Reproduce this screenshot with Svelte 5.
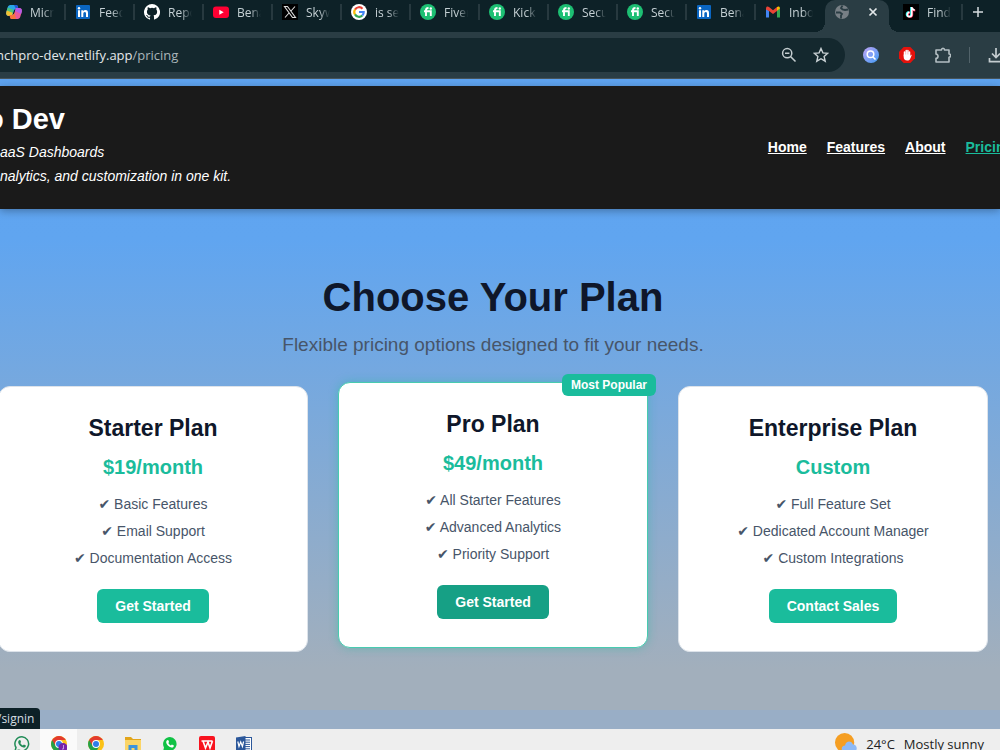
<script>
    const tabs = [
        { icon: 'copilot', title: 'Micro' },
        { icon: 'linkedin', title: 'Feed' },
        { icon: 'github', title: 'Repo' },
        { icon: 'youtube', title: 'Bena' },
        { icon: 'x', title: 'Skyw' },
        { icon: 'google', title: 'is sec' },
        { icon: 'fiverr', title: 'Fiver' },
        { icon: 'fiverr', title: 'Kick' },
        { icon: 'fiverr', title: 'Secu' },
        { icon: 'fiverr', title: 'Secu' },
        { icon: 'linkedin', title: 'Bena' },
        { icon: 'gmail', title: 'Inbo' },
        { icon: 'globe', title: '', active: true },
        { icon: 'tiktok', title: 'Find' }
    ]

    const plans = [
        {
            name: 'Starter Plan',
            price: '$19/month',
            features: ['Basic Features', 'Email Support', 'Documentation Access'],
            action: 'Get Started'
        },
        {
            name: 'Pro Plan',
            price: '$49/month',
            features: ['All Starter Features', 'Advanced Analytics', 'Priority Support'],
            action: 'Get Started',
            popular: true
        },
        {
            name: 'Enterprise Plan',
            price: 'Custom',
            features: ['Full Feature Set', 'Dedicated Account Manager', 'Custom Integrations'],
            action: 'Contact Sales'
        }
    ]

    const apps = ['whatsapp-outline', 'chrome-profile', 'chrome', 'folder', 'whatsapp', 'wps', 'word']
</script>

{#snippet icon(name)}
    <svg class="icon" viewBox="0 0 16 16" aria-hidden="true">
        {#if name === 'copilot'}
            <path d="M5 1h5c1 0 1.500.5 1.800 1.500L12.500 5H10C8.500 5 8 6 7.500 7.500L6 12H3C.5 12-.2 10.500.3 8l1.500-5C2.300 1.500 3.500 1 5 1z" fill="#2aa7e6" />
            <path d="M1 6l6 2-1 4H3C.5 12-.2 10.500.3 8z" fill="#f2c230" />
            <path d="M1.800 3.500L7.500 6 7 9 1 6.500z" fill="#4fc47a" />
            <path d="M8 1h2c1 0 1.500.5 1.800 1.500L12.500 5H10z" fill="#2456d6" />
            <path d="M11 15H6c-1 0-1.500-.5-1.800-1.500L3.500 11H6c1.500 0 2-1 2.500-2.500L10 4h3c2.500 0 3.200 1.500 2.700 4l-1.500 5c-.5 1.500-1.700 2-3.200 2z" fill="#e8589a" />
            <path d="M10 4h3c2.500 0 3.200 1.500 2.700 4l-.6 2L9 7z" fill="#b45be8" />
            <path d="M3.500 11H6c1.500 0 2-1 2.500-2.500L10 15H6c-1 0-1.500-.5-1.800-1.500z" fill="#f5743e" />
        {:else if name === 'linkedin'}
            <rect x="1" y="1" width="14" height="14" rx="1" fill="#0a66c2" />
            <path d="M3 6.300h2V13H3zM6.300 6.300h2v1c.5-.8 1.200-1.200 2.200-1.200 1.900 0 2.500 1.200 2.500 3.100V13h-2V9.700c0-1-.2-1.800-1.200-1.800s-1.500.8-1.500 1.800V13h-2z" fill="#fff" />
            <circle cx="4" cy="4.200" r="1.200" fill="#fff" />
        {:else if name === 'github'}
            <path d="M8 0a8 8 0 0 0-2.530 15.590c.4.070.55-.17.55-.38v-1.490c-2.010.37-2.530-.49-2.690-.94-.09-.23-.48-.94-.82-1.130-.28-.15-.68-.52-.01-.53.63-.01 1.080.58 1.230.82.72 1.210 1.870.87 2.330.66.07-.52.28-.87.51-1.070-1.780-.2-3.640-.89-3.640-3.950 0-.87.31-1.590.82-2.150-.08-.2-.36-1.020.08-2.120 0 0 .67-.21 2.200.82a7.600 7.600 0 0 1 4 0c1.530-1.040 2.200-.82 2.200-.82.44 1.100.16 1.920.08 2.120.51.56.82 1.270.82 2.150 0 3.070-1.870 3.750-3.650 3.950.29.25.54.73.54 1.480v2.200c0 .21.15.46.55.38A8 8 0 0 0 8 0z" fill="#fff" />
        {:else if name === 'youtube'}
            <rect y="2.500" width="16" height="11.500" rx="3" fill="#f03" />
            <path d="M6.300 5.700l4.400 2.500-4.400 2.500z" fill="#fff" />
        {:else if name === 'x'}
            <rect width="16" height="16" fill="#000" />
            <path d="M2.500 2.500h3l8 11h-3zM13 2.500L9 7M3 13.500l4-4.500" fill="none" stroke="#ddd" stroke-width="1.100" />
        {:else if name === 'google'}
            <circle cx="8" cy="8" r="8" fill="#fff" />
            <g fill="none" stroke-width="2.200">
                <path d="M11.500 4.700A4.700 4.700 0 0 0 4 5.600" stroke="#ea4335" />
                <path d="M4 5.500a4.700 4.700 0 0 0 0 5" stroke="#fbbc05" />
                <path d="M4 10.400a4.700 4.700 0 0 0 7.300 1.100" stroke="#34a853" />
                <path d="M11.300 11.500A4.700 4.700 0 0 0 12.700 8H8" stroke="#4285f4" />
            </g>
        {:else if name === 'fiverr'}
            <circle cx="8" cy="8" r="8" fill="#1dbf73" />
            <path d="M4 7.300h6.800V12M6 12V6c0-1.500.8-2 2.500-2" fill="none" stroke="#fff" stroke-width="1.900" />
            <circle cx="10.800" cy="4.500" r="1.200" fill="#fff" />
        {:else if name === 'gmail'}
            <path d="M1 4v9.500h3V7z" fill="#4285f4" />
            <path d="M15 4v9.500h-3V7z" fill="#34a853" />
            <path d="M1 4.500C1 2 3 2 4 3l4 3.200L12 3v4l-4 3-4-3-3-1.500z" fill="#ea4335" />
            <path d="M12 3c1-1 3-1 3 1.500L12 7z" fill="#fbbc04" />
        {:else if name === 'globe'}
            <circle cx="8" cy="8" r="7" fill="#777f85" />
            <path d="M2 8.500h4l2 1.500-1 1.500v3M8.500 1.500L7 4l1.500 1.500L11 6l3-.5" fill="none" stroke="#2a3d44" stroke-width="1.800" />
        {:else if name === 'tiktok'}
            <rect width="16" height="16" fill="#000" />
            <path d="M8 3v7.200A2.200 2.200 0 1 1 5.800 8" fill="none" stroke="#25f4ee" stroke-width="1.800" />
            <path d="M9.300 3.500v7.200a2.200 2.200 0 1 1-2.200-2.200M9.300 4c.4 1.700 1.400 2.500 3 2.700" fill="none" stroke="#fe2c55" stroke-width="1.800" />
            <path d="M8.700 3v7.500a2.200 2.200 0 1 1-2.200-2.200M8.700 3.200c.4 1.700 1.400 2.600 3 2.800" fill="none" stroke="#fff" stroke-width="1.600" />
        {:else if name === 'close'}
            <path d="M4.500 4.500l7 7M11.500 4.500l-7 7" stroke="#e3e8ea" stroke-width="1.700" />
        {:else if name === 'plus'}
            <path d="M8 3v10M3 8h10" stroke="#d5dcdf" stroke-width="1.500" />
        {:else if name === 'zoom-out'}
            <circle cx="6.200" cy="6.200" r="4.600" fill="none" stroke="#c4cdd0" stroke-width="1.500" />
            <path d="M4 6.200h4.400M9.500 9.500l5 5" stroke="#c4cdd0" stroke-width="1.500" />
        {:else if name === 'star'}
            <path d="M8 1.500l1.900 4.400 4.800.4-3.600 3.200 1.100 4.700L8 11.700l-4.200 2.500 1.100-4.700-3.600-3.200 4.800-.4z" fill="none" stroke="#c9d1d4" stroke-width="1.400" />
        {:else if name === 'lens'}
            <defs>
                <linearGradient id="lens" x1="0" y1="0" x2="1" y2="1">
                    <stop offset="0" stop-color="#c3a4f7" />
                    <stop offset="1" stop-color="#3f9df5" />
                </linearGradient>
            </defs>
            <circle cx="8" cy="8" r="8" fill="url(#lens)" />
            <circle cx="7.500" cy="7.200" r="3.300" fill="none" stroke="#fff" stroke-width="1.500" />
            <path d="M10 10l2.500 2.500" stroke="#fff" stroke-width="1.600" />
        {:else if name === 'hand'}
            <path d="M4.700 0h6.600L16 4.700v6.600L11.300 16H4.700L0 11.300V4.700z" fill="#e5120c" />
            <path d="M5.500 9V5M7.200 9V3.500M8.900 9V3.500M10.500 10V5" stroke="#fff" stroke-width="1.500" stroke-linecap="round" />
            <path d="M4.700 7.500h6.500V9l1-1.200c.5 0 .6.5.4.8L11 12.300c-.5.800-1.500 1.200-2.700 1.200-2.600 0-3.600-1.500-3.600-3.500z" fill="#fff" />
        {:else if name === 'puzzle'}
            <path d="M1 3h5.500c0-2.300 3-2.300 3 0H14v4c2.200 0 2.200 3.200 0 3.200V15H1v-3.700c2.700 0 2.700-4.200 0-4.200z" fill="none" stroke="#b4bfc3" stroke-width="1.600" stroke-linejoin="round" />
        {:else if name === 'download'}
            <path d="M8 1v9M4 6.500L8 10.500l4-4M1.500 11v3.700h13V11" fill="none" stroke="#c4cdd0" stroke-width="1.700" />
        {:else if name === 'whatsapp-outline' || name === 'whatsapp'}
            {#if name === 'whatsapp'}
                <path d="M8 1a7 7 0 0 0-6 10.500L1 15.500l4-1A7 7 0 1 0 8 1z" fill="#10c245" />
            {:else}
                <path d="M8 .8a7 7 0 0 0-6 10.700l-1 3.700 3.800-1A7 7 0 1 0 8 .8z" fill="#eee" stroke="#218c57" stroke-width="1.500" />
            {/if}
            <path d="M5 4.200l1.200-.2.900 2-.8 1c.6 1.200 1.400 2 2.600 2.500l1-1 2 1c0 1.500-1 2.300-2.500 2C6.500 11 4.500 8.500 4.200 6.500c-.1-.8.200-1.700.8-2.300z" fill={name === 'whatsapp' ? '#fff' : '#218c57'} />
        {:else if name === 'chrome' || name === 'chrome-profile'}
            <circle cx="8" cy="8" r="8" fill="#fbc116" />
            <path d="M1.100 4A8 8 0 0 0 8 16l3.500-6L8 8z" fill="#24a148" />
            <path d="M1.100 4L5 10.500 8 4.100h6.900A8 8 0 0 0 1.100 4z" fill="#e33b2e" />
            <circle cx="8" cy="8" r="3.900" fill="#fff" />
            <circle cx="8" cy="8" r="3" fill="#2f7de8" />
            {#if name === 'chrome-profile'}
                <circle cx="12" cy="11.500" r="4.500" fill="#7623a8" />
                <path d="M12.500 9v4h-1.500" fill="none" stroke="#c79be0" />
            {/if}
        {:else if name === 'folder'}
            <path d="M0 1h6l2 2h8v12H0z" fill="#e2a51a" />
            <path d="M0 4h16v12H0z" fill="#fbd567" />
            <path d="M3.500 16V9h9v7h-3v-4h-3v4z" fill="#3d94dc" />
        {:else if name === 'wps'}
            <rect width="16" height="16" rx="2" fill="#f8131f" />
            <path d="M2.500 5h11M4 5l2.500 7L9 6l2 6 2.500-7" fill="none" stroke="#fff" stroke-width="1.600" />
        {:else if name === 'word'}
            <rect x="7" y="1.500" width="8.500" height="13" fill="#fff" stroke="#2b579a" />
            <path d="M9 4h5M9 6.200h5M9 8.400h5M9 10.600h5M9 12.800h5" stroke="#2b579a" />
            <path d="M0 1.500L9.500 0v16L0 14.500z" fill="#2b579a" />
            <path d="M1.800 5.500l1.200 5 1.700-4.500 1.700 4.500 1.200-5" fill="none" stroke="#fff" stroke-width="1.200" />
        {:else if name === 'weather'}
            <circle cx="7" cy="7" r="7" fill="#f59e22" />
            <path d="M7.500 14a2.500 2.500 0 0 1-.2-5c.5-3.500 5-3.700 5.700-.7 3.500-.2 3.800 5.200.5 5.700z" fill="#8db9f5" />
        {/if}
    </svg>
{/snippet}

<div class="screen">
    <div class="tab-strip">
        {#each tabs as tab}
            <div class="tab" class:active={tab.active}>
                {@render icon(tab.icon)}
                {#if tab.active}
                    <button class="icon-button" aria-label="Close tab">{@render icon('close')}</button>
                {:else}
                    <span class="tab-title">{tab.title}</span>
                {/if}
            </div>
        {/each}
        <button class="icon-button new-tab" aria-label="New tab">{@render icon('plus')}</button>
    </div>

    <div class="toolbar">
        <div class="omnibox">
            <span class="url">nchpro-dev.netlify.app<span class="path">/pricing</span></span>
            <button class="icon-button" aria-label="Zoom">{@render icon('zoom-out')}</button>
            <button class="icon-button" aria-label="Bookmark this page">{@render icon('star')}</button>
        </div>
        <div class="extensions">
            <button class="icon-button" aria-label="Search extension">{@render icon('lens')}</button>
            <button class="icon-button" aria-label="Ad blocker">{@render icon('hand')}</button>
            <button class="icon-button" aria-label="Extensions">{@render icon('puzzle')}</button>
            <span class="divider"></span>
            <button class="icon-button" aria-label="Downloads">{@render icon('download')}</button>
        </div>
    </div>

    <div class="page">
        <header>
            <div class="brand">
                <h1>o Dev</h1>
                <p>aaS Dashboards</p>
                <p>nalytics, and customization in one kit.</p>
            </div>
            <nav>
                <a href="#home">Home</a>
                <a href="#features">Features</a>
                <a href="#about">About</a>
                <a href="#pricing" class="current">Pricing</a>
            </nav>
        </header>

        <main>
            <h2>Choose Your Plan</h2>
            <p class="lead">Flexible pricing options designed to fit your needs.</p>

            <div class="plans">
                {#each plans as plan}
                    <section class="plan" class:popular={plan.popular}>
                        {#if plan.popular}
                            <span class="badge">Most Popular</span>
                        {/if}
                        <h3>{plan.name}</h3>
                        <p class="price">{plan.price}</p>
                        <ul>
                            {#each plan.features as feature}
                                <li><span class="check">✔</span> {feature}</li>
                            {/each}
                        </ul>
                        <button class="action">{plan.action}</button>
                    </section>
                {/each}
            </div>
        </main>

        <div class="page-end">
            <span class="status">/signin</span>
        </div>
    </div>

    <div class="taskbar">
        {#each apps as app}
            <button class="app" class:open={app === 'chrome-profile'} aria-label={app}>{@render icon(app)}</button>
        {/each}
        <div class="weather">
            {@render icon('weather')}
            <span>24°C</span>
            <span>Mostly sunny</span>
        </div>
    </div>
</div>

<style>
    :global(body) {
        margin: 0;
    }

    .screen {
        display: flex;
        flex-direction: column;
        height: 100vh;
        overflow: hidden;
        font-family: "Open Sans", "Noto Sans", sans-serif;
    }

    h1, h2, h3, p, ul {
        margin: 0;
        padding: 0;
    }

    button {
        border: 0;
        padding: 0;
        background: none;
        font: inherit;
        cursor: pointer;
    }

    .icon {
        display: block;
        flex: none;
        width: 16px;
        height: 16px;
    }

    .icon-button {
        flex: none;
    }

    /* Browser tabs */
    .tab-strip {
        display: flex;
        flex: none;
        height: 32px;
        margin-left: -3px;
        background: #0d2127;
    }

    .tab {
        position: relative;
        display: flex;
        flex: none;
        gap: 8px;
        box-sizing: border-box;
        width: 69px;
        height: 32px;
        padding: 4px 0 0 9px;
    }

    .tab::after {
        content: '';
        position: absolute;
        top: 4px;
        right: 0;
        width: 2px;
        height: 16px;
        background: #27393f;
    }

    .tab.active {
        width: 64px;
        margin-right: 5px;
        border-radius: 10px 10px 0 0;
        background: #2a3d44;
        gap: 15px;
    }

    .tab.active::before,
    .tab.active::after {
        content: '';
        position: absolute;
        top: auto;
        bottom: 0;
        width: 10px;
        height: 10px;
    }

    .tab.active::before {
        left: -10px;
        background: radial-gradient(circle at 0 0, #0d2127 10px, #2a3d44 10px);
    }

    .tab.active::after {
        right: -10px;
        background: radial-gradient(circle at 100% 0, #0d2127 10px, #2a3d44 10px);
    }

    /* the active tab has no divider on its left */
    .tab:has(+ .active)::after {
        display: none;
    }

    .tab-title {
        width: 24px;
        height: 18px;
        overflow: hidden;
        color: #c5d0d4;
        font-size: 12px;
        line-height: 18px;
        white-space: nowrap;
        mask-image: linear-gradient(to right, #000 55%, transparent);
    }

    .tab-strip .icon-button {
        height: 16px;
    }

    .new-tab {
        margin: 4px 0 0 7px;
    }

    /* Address bar */
    .toolbar {
        display: flex;
        flex: none;
        box-sizing: border-box;
        height: 47px;
        padding: 6px 0;
        border-bottom: 1px solid #46545b;
        background: #2a3d44;
    }

    .omnibox {
        display: flex;
        flex: 1;
        align-items: center;
        gap: 16px;
        height: 34px;
        margin-left: -4px;
        padding-right: 16px;
        border-radius: 0 17px 17px 0;
        background: #14282e;
    }

    .url {
        flex: 1;
        color: #e4e9eb;
        font-size: 13px;
    }

    .path {
        color: #aab5b9;
    }

    .extensions {
        display: flex;
        flex: none;
        align-items: center;
        gap: 20px;
        height: 34px;
        margin: 0 -4px 0 18px;
    }

    .divider {
        width: 1px;
        height: 16px;
        margin: 0 -2px;
        background: #52636a;
    }

    /* Web page */
    .page {
        display: flex;
        flex: 1;
        flex-direction: column;
        padding-top: 7px;
        overflow: hidden;
        background: linear-gradient(#5ea3ef 0, #60a5f0 160px, #a2afbc 590px);
        font-family: "Liberation Sans", Arial, sans-serif;
    }

    header {
        display: flex;
        flex: none;
        align-items: center;
        justify-content: space-between;
        padding: 16px 0 21px;
        background: #1a1a1a;
        box-shadow: 0 2px 8px rgba(0, 0, 0, 0.3);
        color: #fff;
    }

    h1 {
        margin-bottom: 3px;
        font-size: 29px;
        line-height: 35px;
        text-indent: -14px;
    }

    header p {
        font-size: 14px;
        font-style: italic;
        line-height: 24px;
    }

    nav {
        display: flex;
        gap: 20px;
        margin-right: -13px;
        padding-top: 4px;
    }

    nav a {
        color: #fff;
        font-size: 14px;
        font-weight: bold;
    }

    nav .current {
        color: #1abc9c;
    }

    main {
        flex: 1;
        margin-left: -2px;
        padding: 64px 12px 0 0;
        text-align: center;
    }

    h2 {
        color: #0f172a;
        font-size: 40px;
        line-height: 48px;
    }

    .lead {
        margin-top: 10px;
        color: #475569;
        font-size: 19px;
        line-height: 28px;
    }

    .plans {
        display: grid;
        grid-template-columns: repeat(3, 1fr);
        gap: 30px;
        margin-top: 27px;
    }

    .plan {
        position: relative;
        padding: 27px 20px 28px;
        border: 1px solid #dde3ea;
        border-radius: 12px;
        background: #fff;
    }

    .plan.popular {
        top: -4px;
        border-color: #48cbb0;
        box-shadow: 0 0 10px rgba(26, 188, 156, 0.4);
    }

    .badge {
        position: absolute;
        top: -9px;
        right: -9px;
        padding: 0 9px;
        border-radius: 6px;
        background: #1abc9c;
        color: #fff;
        font-size: 12px;
        font-weight: bold;
        line-height: 22px;
    }

    h3 {
        color: #0f172a;
        font-size: 23px;
        line-height: 28px;
    }

    .price {
        margin-top: 13px;
        color: #1abc9c;
        font-size: 20px;
        font-weight: bold;
        line-height: 24px;
    }

    ul {
        margin: 12px 0 17px;
        color: #475569;
        font-size: 14px;
        line-height: 27px;
        list-style: none;
    }

    .check {
        font-family: "DejaVu Sans", sans-serif;
        line-height: 1;
    }

    .action {
        height: 34px;
        padding: 0 18px;
        border-radius: 6px;
        background: #1abc9c;
        color: #fff;
        font-size: 14px;
        font-weight: bold;
    }

    .popular .action {
        background: #16a085;
    }

    .page-end {
        display: flex;
        flex: none;
        align-items: flex-end;
        height: 19px;
        background: #99aec6;
    }

    .status {
        margin-left: -3px;
        padding-right: 6px;
        border-radius: 0 4px 0 0;
        background: #0d2127;
        color: #d5dee2;
        font-family: "Open Sans", sans-serif;
        font-size: 12px;
        line-height: 21px;
    }

    /* Windows taskbar */
    .taskbar {
        display: flex;
        flex: none;
        height: 21px;
        padding-left: 3px;
        overflow: hidden;
        background: #eee;
    }

    .app {
        flex: none;
        width: 37px;
        height: 30px;
    }

    .app .icon {
        margin: 0 auto;
    }

    .app.open {
        background: #fafafa;
    }

    .weather {
        display: flex;
        align-items: center;
        gap: 9px;
        height: 30px;
        margin-left: auto;
        padding-right: 16px;
        color: #222;
        font-size: 13px;
        white-space: nowrap;
    }

    .weather .icon {
        width: 22px;
        height: 22px;
    }
</style>
